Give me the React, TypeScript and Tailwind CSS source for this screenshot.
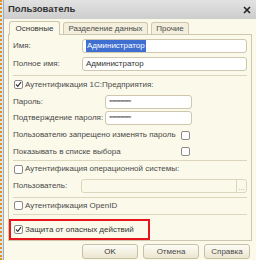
import React from "react";

const Check = ({ on }: { on?: boolean }) => (
  <span className="w-[9px] h-[9px] border border-[#8a8a8a] rounded-[2px] bg-white flex items-center justify-center shrink-0">
    {on && (
      <svg width="7" height="7" viewBox="0 0 7 7">
        <path d="M1 3.5 L2.8 5.3 L6 1.2" stroke="#333" strokeWidth="1.2" fill="none" />
      </svg>
    )}
  </span>
);

const Field = ({ children, className = "" }: { children?: React.ReactNode; className?: string }) => (
  <div className={`h-[14px] border border-[#cfc7ad] rounded-[3px] bg-white flex items-center px-[3px] ${className}`}>
    {children}
  </div>
);

const Sep = () => <div className="h-px bg-[#ddd6bf] mx-[4px]" />;

export default function App() {
  return (
    <div className="w-[256px] h-[260px] flex bg-white overflow-hidden text-[8px] text-[#4a4a4a] [font-family:'Liberation_Sans',Arial,sans-serif]">
      {/* dotted selection edge */}
      <div className="w-[3px] border-l-2 border-dotted border-[#e0901f] bg-[#d9e6f5]" />
      <div className="flex-1 flex flex-col border-l border-[#a8a8a8] bg-[#fbf9ea]">
        {/* title */}
        <div className="h-[19px] bg-gradient-to-b from-[#e2e2e2] to-[#cdcdcd] flex items-center justify-between pl-[4px] pr-[5px]">
          <span className="font-bold text-[9.5px] text-[#333]">Пользователь</span>
          <svg width="8" height="8" viewBox="0 0 8 8">
            <path d="M1 1 L7 7 M7 1 L1 7" stroke="#222" strokeWidth="1.6" />
          </svg>
        </div>

        {/* tabs */}
        <div className="flex items-end gap-[3px] pl-[5px] pt-[2px] h-[15px]">
          <div className="h-[14px] w-[51px] border border-b-0 border-[#cfc7ad] rounded-t-[3px] bg-[#fbf9ea] flex items-center justify-center text-[#333] -mb-px z-10">
            Основные
          </div>
          <div className="h-[12px] w-[85px] border border-b-0 border-[#cfc7ad] rounded-t-[3px] bg-[#f3efdc] flex items-center justify-center">
            Разделение данных
          </div>
          <div className="h-[12px] w-[38px] border border-b-0 border-[#cfc7ad] rounded-t-[3px] bg-[#f3efdc] flex items-center justify-center">
            Прочие
          </div>
        </div>

        {/* panel */}
        <div className="mx-[4px] h-[207px] border border-[#cfc7ad] flex flex-col pt-[3px]">
          <div className="flex items-center h-[17px] px-[4px]">
            <span className="w-[69px]">Имя:</span>
            <Field className="flex-1">
              <span className="bg-[#3f6fd0] text-white px-px">Администратор</span>
            </Field>
          </div>
          <div className="flex items-center h-[18px] px-[4px]">
            <span className="w-[69px]">Полное имя:</span>
            <Field className="flex-1 text-[#333]">Администратор</Field>
          </div>
          <div className="mt-[3px]"><Sep /></div>
          <div className="flex items-center gap-[2px] h-[17px] px-[5px]">
            <Check on />
            <span>Аутентификация 1С:Предприятия:</span>
          </div>
          <div className="flex items-center h-[17px] px-[4px]">
            <span className="w-[92px]">Пароль:</span>
            <Field className="w-[87px] text-[6px] leading-[6px] tracking-[-1px] text-[#555]">****************</Field>
          </div>
          <div className="flex items-center h-[17px] px-[4px]">
            <span className="w-[92px]">Подтверждение пароля:</span>
            <Field className="w-[87px] text-[6px] leading-[6px] tracking-[-1px] text-[#555]">****************</Field>
          </div>
          <div className="flex items-center h-[17px] px-[4px]">
            <span className="w-[168px]">Пользователю запрещено изменять пароль</span>
            <Check />
          </div>
          <div className="flex items-center h-[17px] px-[4px]">
            <span className="w-[168px]">Показывать в списке выбора</span>
            <Check />
          </div>
          <Sep />
          <div className="flex items-center gap-[2px] h-[17px] px-[5px]">
            <Check />
            <span>Аутентификация операционной системы:</span>
          </div>
          <div className="flex items-center h-[17px] px-[4px]">
            <span className="w-[68px]">Пользователь:</span>
            <div className="flex-1 h-[14px] border border-[#ddd6bf] rounded-[3px] bg-[#fbf9ea] flex justify-end">
              <div className="w-[10px] border-l border-[#ddd6bf] flex items-end justify-center text-[#aaa] leading-[9px]">...</div>
            </div>
          </div>
          <div className="mt-[2px]"><Sep /></div>
          <div className="flex items-center gap-[2px] h-[17px] px-[5px]">
            <Check />
            <span>Аутентификация OpenID</span>
          </div>
          <Sep />
          <div className="mt-[4px] w-[141px] h-[21px] border-2 border-[#e8141c] flex items-center gap-[2px] px-[3px]">
            <Check on />
            <span className="text-[#333]">Защита от опасных действий</span>
          </div>
        </div>

        {/* buttons */}
        <div className="flex justify-end gap-[5px] pr-[6px] pt-[3px]">
          <div className="w-[56px] h-[15px] border border-[#c8c0a5] rounded-[3px] bg-gradient-to-b from-[#fdfcf6] to-[#ece6cf] flex items-center justify-center text-[#333]">OK</div>
          <div className="w-[56px] h-[15px] border border-[#c8c0a5] rounded-[3px] bg-gradient-to-b from-[#fdfcf6] to-[#ece6cf] flex items-center justify-center">Отмена</div>
          <div className="w-[46px] h-[15px] border border-[#c8c0a5] rounded-[3px] bg-gradient-to-b from-[#fdfcf6] to-[#ece6cf] flex items-center justify-center">Справка</div>
        </div>
      </div>
    </div>
  );
}
